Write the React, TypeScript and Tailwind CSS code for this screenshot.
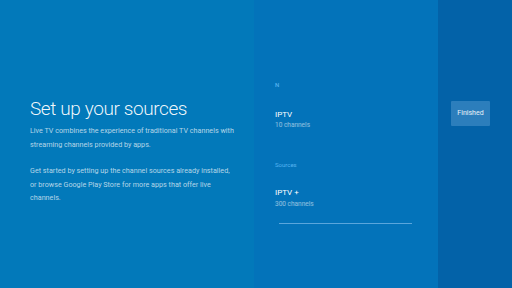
import React from "react";

export default function App() {
  return (
    <div
      className="flex w-[512px] h-[288px] overflow-hidden"
      style={{ fontFamily: "Roboto, 'Liberation Sans', sans-serif" }}
    >
      <div className="w-[254px] h-full bg-[#0279ba] flex flex-col pl-[30px] pr-[17px] pt-[97px]">
        <div className="text-[19px] leading-[24px] font-light tracking-[-0.4px] text-white/95 whitespace-nowrap">Set up your sources</div>
        <div className="mt-[3px] text-[7.2px] leading-[13.5px] text-white/70">
          Live TV combines the experience of traditional TV channels with streaming channels provided by apps.
        </div>
        <div className="mt-[13px] text-[7.2px] leading-[13.5px] text-white/70">
          Get started by setting up the channel sources already installed, or browse Google Play Store for more apps that offer live channels.
        </div>
      </div>
      <div className="w-[184px] h-full bg-[#0373ba] flex flex-col pl-[21px] pt-[81px]">
        <div className="text-[6px] leading-[8px] text-[#56b4f0] font-medium">N</div>
        <div className="mt-[20px] text-[8px] leading-[11px] text-white">IPTV</div>
        <div className="mt-[1px] text-[6.5px] leading-[9px] text-white/55">10 channels</div>
        <div className="mt-[31px] text-[6px] leading-[8px] text-[#56b4f0]">Sources</div>
        <div className="mt-[18px] text-[8px] leading-[11px] text-white">IPTV +</div>
        <div className="mt-[2px] text-[6.5px] leading-[9px] text-white/55">300 channels</div>
        <div className="mt-[14px] ml-[4px] w-[133px] h-px bg-[#5aa6dc]" />
      </div>
      <div className="flex-1 h-full bg-[#0362a8] pt-[101px] pl-[13px]">
        <div className="w-[39px] h-[25px] bg-[#2c7ebc] rounded-[1px] flex items-center justify-center text-[7px] text-white/90">
          Finished
        </div>
      </div>
    </div>
  );
}
